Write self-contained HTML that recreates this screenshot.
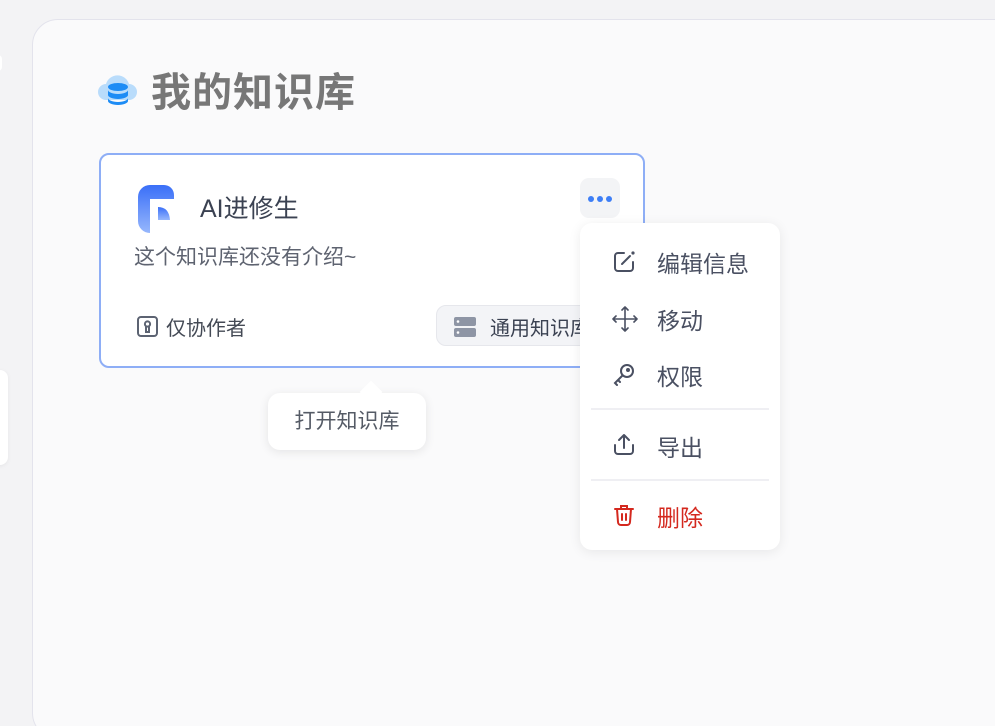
<!DOCTYPE html>
<html><head><meta charset="utf-8"><style>
*{margin:0;padding:0;box-sizing:border-box}
html,body{width:995px;height:726px;overflow:hidden}
body{background:#f3f3f5;position:relative;font-family:"Liberation Sans","Noto Sans CJK SC",sans-serif}
.panel{position:absolute;left:32px;top:19px;width:1000px;height:720px;background:#fafafb;border:1px solid #e3e3ec;border-radius:26px}
.side{position:absolute;left:-10px;top:370px;width:18px;height:95px;background:#fff;border-radius:8px;box-shadow:0 1px 4px rgba(0,0,0,.06)}
.side2{position:absolute;left:-6px;top:55px;width:8px;height:16px;background:#fff;border-radius:4px}
h1{position:absolute;left:151px;top:68px;font-size:40px;font-weight:bold;color:#777;letter-spacing:1px;line-height:50px}
.card{position:absolute;left:99px;top:153px;width:546px;height:215px;background:#fff;border:2px solid #8eaef6;border-radius:10px}
.t{position:absolute;font-size:25px;color:#3b4252}
.desc{position:absolute;left:33px;top:86px;font-size:21px;color:#5e6370}
.foot{position:absolute;left:60px;top:157px;font-size:20px;color:#444a55}
.badge{position:absolute;left:335px;top:150px;width:160px;height:41px;background:#f3f4f7;border:1px solid #e6e7ec;border-radius:10px;font-size:20px;color:#3b4252;padding:6px 0 0 53px;white-space:nowrap;overflow:hidden}
.more{position:absolute;left:479px;top:23px;width:40px;height:40px;background:#f3f4f6;border-radius:9px}
.more i{position:absolute;top:18px;width:6px;height:6px;border-radius:3px;background:#3d7ef6}
.menu{position:absolute;left:580px;top:223px;width:200px;height:327px;background:#fff;border-radius:12px;box-shadow:0 2px 12px rgba(0,0,0,.08)}
.item{position:absolute;left:77px;font-size:23px;color:#4a5062}
.sep{position:absolute;left:11px;width:178px;height:2px;background:#efeff3}
.ic{position:absolute;left:32px}
.tip{position:absolute;left:268px;top:393px;width:158px;height:57px;background:#fff;border-radius:12px;box-shadow:0 2px 10px rgba(0,0,0,.09);font-size:21px;color:#555b66;text-align:center;line-height:57px}
.tip:before{content:"";position:absolute;left:95px;top:-9px;width:16px;height:16px;background:#fff;transform:rotate(45deg)}
</style></head><body>
<div class="side2"></div>
<div class="panel"></div>
<div class="side"></div>
<svg style="position:absolute;left:98px;top:70px" width="40" height="40" viewBox="0 0 40 40">
<path d="M8 30a8 8 0 0 1 0-16a12 12 0 0 1 23 0a8 8 0 0 1 0 16z" fill="#b9dcfb"/>
<ellipse cx="20" cy="17" rx="10" ry="4" fill="#1d8cf5"/>
<path d="M10 20c0 2 4.5 4 10 4s10-2 10-4v5c0 2-4.5 4-10 4s-10-2-10-4z" fill="#1d8cf5"/>
<path d="M10 28c0 2 4.5 4 10 4s10-2 10-4v3c0 2-4.5 4-10 4s-10-2-10-4z" fill="#1d8cf5"/>
</svg>
<h1>我的知识库</h1>
<div class="card">
<svg style="position:absolute;left:37px;top:28px" width="38" height="50" viewBox="0 0 38 50">
<defs><linearGradient id="g" x1="0" y1="0" x2="0" y2="1"><stop offset="0" stop-color="#3a6ff8"/><stop offset="1" stop-color="#97b7fc"/></linearGradient></defs>
<path d="M0 14a12 12 0 0 1 12-12h14a10 10 0 0 1 10 10v4H12v34a12 12 0 0 1-12-12z" fill="url(#g)"/>
<path d="M20 24q11 0 12 13H20z" fill="url(#g)"/>
</svg>
<div class="t" style="left:99px;top:34px">AI进修生</div>
<div class="desc">这个知识库还没有介绍~</div>
<svg style="position:absolute;left:35px;top:160px" width="23" height="23" viewBox="0 0 23 23" fill="none" stroke="#5c6372" stroke-width="2"><rect x="2" y="2" width="19" height="19" rx="3"/><circle cx="11.5" cy="9" r="2.6"/><path d="M10 11v6h3v-6"/></svg>
<div class="foot" style="left:65px">仅协作者</div>
<div class="badge">通用知识库</div>
<svg style="position:absolute;left:353px;top:162px" width="22" height="20" viewBox="0 0 22 20"><rect x="0" y="0" width="22" height="9" rx="2" fill="#8e95a5"/><rect x="0" y="11" width="22" height="9" rx="2" fill="#8e95a5"/><circle cx="4" cy="4.5" r="1.3" fill="#fff"/><circle cx="4" cy="15.5" r="1.3" fill="#fff"/></svg>
<div class="more"><i style="left:8px"></i><i style="left:17px"></i><i style="left:26px"></i></div>
</div>
<div class="tip">打开知识库</div>
<div class="menu">
<svg class="ic" style="top:27px" width="24" height="24" viewBox="0 0 24 24" fill="none" stroke="#4a5062" stroke-width="2" stroke-linecap="round"><path d="M12 3H6a3 3 0 0 0-3 3v12a3 3 0 0 0 3 3h12a3 3 0 0 0 3-3v-6"/><path d="M10 14l8-8"/><circle cx="21" cy="3" r="0.6" fill="#4a5062"/></svg>
<div class="item" style="top:22px">编辑信息</div>
<svg class="ic" style="top:83px" width="26" height="26" viewBox="0 0 26 26" fill="none" stroke="#4a5062" stroke-width="1.6" stroke-linecap="round" stroke-linejoin="round"><path d="M13 1v24M1 13h24M10 4l3-3 3 3M10 22l3 3 3-3M4 10l-3 3 3 3M22 10l3 3-3 3"/></svg>
<div class="item" style="top:79px">移动</div>
<svg class="ic" style="top:139px" width="24" height="24" viewBox="0 0 24 24" fill="none" stroke="#4a5062" stroke-width="2" stroke-linecap="round"><circle cx="15" cy="9" r="6"/><circle cx="16" cy="8" r="1"/><path d="M10.5 13.5L3 21l2 2M6 18l2 2"/></svg>
<div class="item" style="top:135px">权限</div>
<div class="sep" style="top:185px"></div>
<svg class="ic" style="top:209px" width="24" height="24" viewBox="0 0 24 24" fill="none" stroke="#4a5062" stroke-width="2" stroke-linecap="round" stroke-linejoin="round"><path d="M3 13v6a3 3 0 0 0 3 3h12a3 3 0 0 0 3-3v-6M12 16V3M7 8l5-5 5 5"/></svg>
<div class="item" style="top:206px">导出</div>
<div class="sep" style="top:256px"></div>
<svg class="ic" style="top:280px" width="24" height="24" viewBox="0 0 24 24" fill="none" stroke="#d4281e" stroke-width="2" stroke-linecap="round"><path d="M3 6h18M9 6V3h6v3M5 6l1 13a3 3 0 0 0 3 3h6a3 3 0 0 0 3-3l1-13M10 11v6M14 11v6"/></svg>
<div class="item" style="top:276px;color:#d4281e">删除</div>
</div>
</body></html>
